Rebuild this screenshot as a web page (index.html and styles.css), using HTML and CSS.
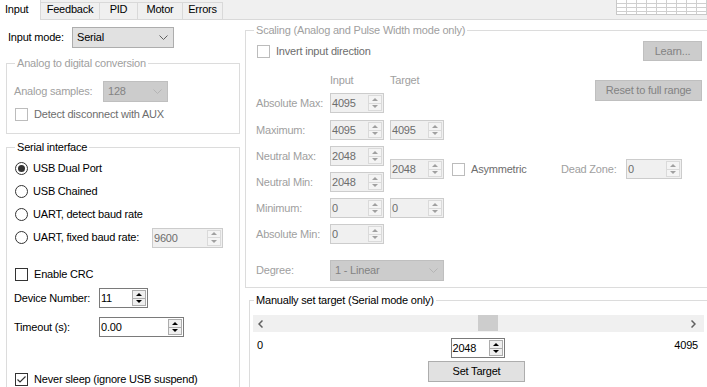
FILE: index.html
```html
<!DOCTYPE html>
<html>
<head>
<meta charset="utf-8">
<link rel="stylesheet" href="styles.css">
</head>
<body>
<div class="tabstrip">
  <div class="tab active">Input</div>
  <div class="tab t-feedback">Feedback</div>
  <div class="tab t-pid">PID</div>
  <div class="tab t-motor">Motor</div>
  <div class="tab t-errors">Errors</div>
  <div class="strip-fill"><div class="mini-grid"></div></div>
</div>
<div class="page">
  <div class="left">
    <div class="mode-row">
      <span class="mode-lbl">Input mode:</span>
      <div class="combo combo-serial"><span>Serial</span><svg class="chev" width="9" height="5" viewBox="0 0 9 5"><path d="M0.5 0.5L4.5 4.5L8.5 0.5" fill="none" stroke="#606060"/></svg></div>
    </div>
    <fieldset class="grp adc">
      <legend class="dis-title">Analog to digital conversion</legend>
      <div class="samples-row">
        <span class="samples-lbl">Analog samples:</span>
        <div class="combo dis combo-128"><span>128</span><svg class="chev" width="9" height="5" viewBox="0 0 9 5"><path d="M0.5 0.5L4.5 4.5L8.5 0.5" fill="none" stroke="#606060"/></svg></div>
      </div>
      <div class="chk-row dis detect"><span class="box"></span><span>Detect disconnect with AUX</span></div>
    </fieldset>
    <fieldset class="grp serial">
      <legend>Serial interface</legend>
      <div class="radios">
        <div class="radio-row"><span class="radio on"></span><span>USB Dual Port</span></div>
        <div class="radio-row"><span class="radio"></span><span>USB Chained</span></div>
        <div class="radio-row"><span class="radio"></span><span>UART, detect baud rate</span></div>
        <div class="radio-row"><span class="radio"></span><span class="baud-lbl">UART, fixed baud rate:</span>
          <div class="spin dis w-baud"><span class="sv">9600</span><span class="ud"><span class="ua"></span><span class="da"></span></span></div>
        </div>
      </div>
      <div class="chk-row crc"><span class="box"></span><span>Enable CRC</span></div>
      <div class="field-row dev-row">
        <span class="field-lbl">Device Number:</span>
        <div class="spin w-dev"><span class="sv">11</span><span class="ud"><span class="ua"></span><span class="da"></span></span></div>
      </div>
      <div class="field-row timeout-row">
        <span class="field-lbl">Timeout (s):</span>
        <div class="spin w-timeout"><span class="sv">0.00</span><span class="ud"><span class="ua"></span><span class="da"></span></span></div>
      </div>
      <div class="chk-row never"><span class="box"><svg width="11" height="11" viewBox="0 0 11 11"><path d="M1.5 5.5L4 8L9.5 2.5" fill="none" stroke="#333" stroke-width="1.2"/></svg></span><span>Never sleep (ignore USB suspend)</span></div>
    </fieldset>
  </div>

  <div class="right">
    <fieldset class="grp scaling">
      <legend class="dis-title">Scaling (Analog and Pulse Width mode only)</legend>
      <div class="sgrid">
        <div class="chk-row dis invert"><span class="box"></span><span>Invert input direction</span></div>
        <div class="btn dis learn">Learn...</div>
        <div class="hdr hdr-in">Input</div>
        <div class="hdr hdr-tg">Target</div>
        <div class="btn dis reset">Reset to full range</div>

        <div class="rlbl r3">Absolute Max:</div>
        <div class="spin dis w54 c-in r3"><span class="sv">4095</span><span class="ud"><span class="ua"></span><span class="da"></span></span></div>

        <div class="rlbl r4">Maximum:</div>
        <div class="spin dis w54 c-in r4"><span class="sv">4095</span><span class="ud"><span class="ua"></span><span class="da"></span></span></div>
        <div class="spin dis w54 c-tg r4"><span class="sv">4095</span><span class="ud"><span class="ua"></span><span class="da"></span></span></div>

        <div class="rlbl r5">Neutral Max:</div>
        <div class="spin dis w54 c-in r5"><span class="sv">2048</span><span class="ud"><span class="ua"></span><span class="da"></span></span></div>

        <div class="rlbl r6">Neutral Min:</div>
        <div class="spin dis w54 c-in r6"><span class="sv">2048</span><span class="ud"><span class="ua"></span><span class="da"></span></span></div>

        <div class="spin dis w54 c-tg neutral-tg"><span class="sv">2048</span><span class="ud"><span class="ua"></span><span class="da"></span></span></div>
        <div class="asym-row">
          <div class="chk-row dis asym"><span class="box"></span><span>Asymmetric</span></div>
          <span class="dz-lbl">Dead Zone:</span>
          <div class="spin dis w-dz"><span class="sv">0</span><span class="ud"><span class="ua"></span><span class="da"></span></span></div>
        </div>

        <div class="rlbl r7">Minimum:</div>
        <div class="spin dis w54 c-in r7"><span class="sv">0</span><span class="ud"><span class="ua"></span><span class="da"></span></span></div>
        <div class="spin dis w54 c-tg r7"><span class="sv">0</span><span class="ud"><span class="ua"></span><span class="da"></span></span></div>

        <div class="rlbl r8">Absolute Min:</div>
        <div class="spin dis w54 c-in r8"><span class="sv">0</span><span class="ud"><span class="ua"></span><span class="da"></span></span></div>

        <div class="rlbl r9 deg-lbl">Degree:</div>
        <div class="combo dis deg"><span>1 - Linear</span><svg class="chev" width="9" height="5" viewBox="0 0 9 5"><path d="M0.5 0.5L4.5 4.5L8.5 0.5" fill="none" stroke="#606060"/></svg></div>
      </div>
    </fieldset>

    <fieldset class="grp manual">
      <legend>Manually set target (Serial mode only)</legend>
      <div class="sbar">
        <span class="sb-arrow sb-left"><svg width="5" height="8" viewBox="0 0 5 8"><path d="M4.5 0.5L1 4L4.5 7.5" fill="none" stroke="#606060" stroke-width="1.5"/></svg></span>
        <span class="sb-track"><span class="thumb" style="margin-left: 208px"></span></span>
        <span class="sb-arrow sb-right"><svg width="5" height="8" viewBox="0 0 5 8"><path d="M0.5 0.5L4 4L0.5 7.5" fill="none" stroke="#606060" stroke-width="1.5"/></svg></span>
      </div>
      <div class="val-row">
        <span class="v0">0</span>
        <div class="spin w54"><span class="sv">2048</span><span class="ud"><span class="ua"></span><span class="da"></span></span></div>
        <span class="vmax">4095</span>
      </div>
      <div class="btn-wrap"><div class="btn set-btn">Set Target</div></div>
    </fieldset>
  </div>
</div>
</body>
</html>
```

FILE: styles.css
```css
* { box-sizing: border-box; }
html, body { margin: 0; padding: 0; }
body {
  width: 707px;
  height: 387px;
  overflow: hidden;
  background: #fff;
  font-family: "Liberation Sans", Arial, sans-serif;
  font-size: 11px;
  line-height: 13px;
  letter-spacing: -0.2px;
  color: #000;
}

/* ---------- tab strip ---------- */
.tabstrip { display: flex; height: 20px; background: #f0f0f0; }
.tab {
  flex: none;
  margin-top: 2px;
  height: 18px;
  border: 1px solid #d9d9d9;
  border-left: none;
  background: #f0f0f0;
  text-align: center;
  line-height: 13px;
  white-space: nowrap;
}
.tab.active {
  margin-top: 0;
  height: 20px;
  width: 41px;
  border: none;
  border-right: 1px solid #d9d9d9;
  background: #fff;
  padding: 3px 0 0 5px;
  text-align: left;
}
.t-feedback { width: 59px; }
.t-pid { width: 38px; }
.t-motor { width: 45px; }
.t-errors { width: 40px; }
.strip-fill {
  flex: 1;
  height: 20px;
  border-bottom: 1px solid #d9d9d9;
  display: flex;
  justify-content: flex-end;
}
.mini-grid {
  width: 91px;
  height: 15px;
  background-color: #fff;
  border-left: 1px solid #c8c8c8;
  border-bottom: 1px solid #c8c8c8;
  background-image:
    linear-gradient(to right, #cfcfcf 1px, transparent 1px),
    linear-gradient(to bottom, #cfcfcf 1px, transparent 1px);
  background-size: 10px 100%, 100% 4px;
  background-position: 9px 0, 0 3px;
}

/* ---------- layout ---------- */
.page { display: flex; height: 367px; overflow: hidden; }
.left { flex: none; width: 245px; height: 367px; padding-left: 6px; overflow: hidden; }
.right { flex: none; width: 462px; height: 367px; overflow: hidden; }

/* ---------- common controls ---------- */
.grp {
  margin: 0;
  border: 1px solid #dcdcdc;
  padding: 0 8px;
  min-width: 0;
}
.grp legend { padding: 0 2px; line-height: 13px; white-space: nowrap; }
.grp legend.dis-title { color: #a0a0a0; }

.combo {
  display: flex;
  align-items: center;
  justify-content: space-between;
  height: 21px;
  border: 1px solid #adadad;
  background: #e1e1e1;
  padding: 0 5px 0 4px;
  flex: none;
}
.combo.dis { background: #cccccc; border-color: #bfbfbf; color: #838383; }
.combo.dis .chev path { stroke: #b4b4b4; }
.chev { display: block; }

.chk-row { display: flex; align-items: center; height: 13px; white-space: nowrap; }
.box {
  width: 13px;
  height: 13px;
  flex: none;
  border: 1px solid #333;
  background: #fff;
  margin-right: 6px;
}
.box svg { display: block; }
.chk-row.dis { color: #6d6d6d; }
.chk-row.dis .box { border-color: #bcbcbc; }

.radio-row { display: flex; align-items: center; height: 23px; white-space: nowrap; }
.radio {
  width: 13px;
  height: 13px;
  flex: none;
  border: 1px solid #333;
  border-radius: 50%;
  background: #fff;
  margin-right: 5px;
  display: flex;
  align-items: center;
  justify-content: center;
}
.radio.on::after {
  content: "";
  width: 7px;
  height: 7px;
  border-radius: 50%;
  background: #333;
}

.spin {
  display: flex;
  height: 20px;
  flex: none;
  border: 1px solid #7a7a7a;
  background: #fff;
}
.sv { flex: 1; padding-left: 1px; line-height: 18px; overflow: hidden; white-space: nowrap; }
.ud {
  width: 14px;
  margin: 1px 1px 1px 0;
  border: 1px solid #acacac;
  background: #efefef;
  display: flex;
  flex-direction: column;
}
.ua, .da { flex: 1; display: flex; align-items: center; justify-content: center; }
.ua { border-bottom: 1px solid #acacac; }
.ua::after {
  content: "";
  border-left: 3px solid transparent;
  border-right: 3px solid transparent;
  border-bottom: 3px solid #000;
}
.da::after {
  content: "";
  border-left: 3px solid transparent;
  border-right: 3px solid transparent;
  border-top: 3px solid #000;
}
.spin.dis { border-color: #cccccc; background: #f0f0f0; color: #6d6d6d; }
.spin.dis .ud { border-color: #dadada; background: #f4f4f4; }
.spin.dis .ua { border-bottom-color: #dadada; }
.spin.dis .ua::after { border-bottom-color: #a0a0a0; }
.spin.dis .da::after { border-top-color: #a0a0a0; }

.btn {
  display: flex;
  align-items: center;
  justify-content: center;
  border: 1px solid #adadad;
  background: #e1e1e1;
  white-space: nowrap;
}
.btn.dis { background: #cccccc; border-color: #bfbfbf; color: #838383; }

/* ---------- left column ---------- */
.mode-row { display: flex; align-items: center; margin-top: 7px; padding-left: 2px; height: 21px; }
.mode-lbl { width: 64px; }
.combo-serial { width: 102px; }

.adc { width: 234px; margin-top: 9px; padding-bottom: 12px; }
.samples-row { display: flex; align-items: center; margin-top: 11px; height: 21px; }
.samples-lbl { width: 89px; margin-left: -1px; color: #a0a0a0; }
.combo-128 { width: 65px; }
.detect { margin-top: 6px; }

.serial { width: 234px; margin-top: 7px; padding-bottom: 30px; }
.radios { margin-top: 3px; }
.baud-lbl { width: 119px; }
.w-baud { width: 71px; }
.crc { margin-top: 19px; }
.field-row { display: flex; align-items: center; height: 20px; }
.dev-row { margin-top: 7px; }
.timeout-row { margin-top: 9px; }
.field-lbl { width: 85px; margin-left: -1px; }
.w-dev { width: 49px; }
.w-timeout { width: 85px; }
.never { margin-top: 36px; }

/* ---------- scaling group ---------- */
.scaling { width: 468px; margin-top: 4px; padding: 4px 10px 6px 10px; }
.scaling legend { margin-left: -2px; }
.sgrid {
  display: grid;
  grid-template-columns: 74px 54px 6px 54px 1fr;
  grid-template-rows: 20px 32px 27px 26px 26px 26px 26px 26px 31px;
}
.invert { grid-column: 1 / 5; grid-row: 1; align-self: center; margin-left: 1px; }
.learn { grid-column: 5; grid-row: 1; justify-self: end; width: 59px; height: 20px; }
.hdr { grid-row: 2; align-self: end; margin-bottom: 6px; color: #a0a0a0; }
.hdr-in { grid-column: 2; }
.hdr-tg { grid-column: 4; }
.reset {
  grid-column: 5;
  grid-row: 2 / 4;
  justify-self: end;
  align-self: start;
  margin-top: 19px;
  width: 107px;
  height: 21px;
  color: #4a4a4a;
}
.rlbl { grid-column: 1; align-self: start; line-height: 20px; color: #a0a0a0; white-space: nowrap; }
.w54 { width: 54px; }
.c-in { grid-column: 2; align-self: start; }
.c-tg { grid-column: 4; align-self: start; }
.r3 { grid-row: 3; }
.r4 { grid-row: 4; }
.r5 { grid-row: 5; }
.r6 { grid-row: 6; }
.r7 { grid-row: 7; }
.r8 { grid-row: 8; }
.r9 { grid-row: 9; }
.neutral-tg { grid-row: 5 / 7; margin-top: 13px; }
.asym-row {
  grid-column: 5;
  grid-row: 5 / 7;
  align-self: start;
  margin-top: 13px;
  height: 20px;
  display: flex;
  align-items: center;
  padding-left: 8px;
}
.asym { width: 109px; }
.dz-lbl { width: 65px; color: #a0a0a0; white-space: nowrap; }
.w-dz { width: 56px; }
.deg-lbl { align-self: end; line-height: 21px; }
.deg { grid-column: 2 / 5; grid-row: 9; align-self: end; }

/* ---------- manual group ---------- */
.manual { width: 466px; margin: 6px 0 0 4px; padding: 0 3px 30px 3px; }
.manual legend { margin-left: 1px; }
.sbar { width: 451px; height: 17px; margin-top: 8px; background: #f0f0f0; display: flex; }
.sb-arrow { width: 17px; height: 17px; flex: none; display: flex; align-items: center; justify-content: center; }
.sb-left { padding-right: 2px; }
.sb-right { padding-right: 4px; }
.sb-track { flex: 1; display: flex; }
.thumb { width: 20px; height: 16px; background: #cdcdcd; }
.val-row {
  width: 451px;
  display: grid;
  grid-template-columns: 1fr auto 1fr;
  align-items: start;
  margin-top: 6px;
  padding: 0 6px 0 4px;
}
.v0 { margin-top: 1px; }
.vmax { margin-top: 1px; text-align: right; }
.btn-wrap { width: 451px; display: flex; justify-content: center; padding-right: 4px; margin-top: 3px; }
.set-btn { width: 97px; height: 21px; }
```
